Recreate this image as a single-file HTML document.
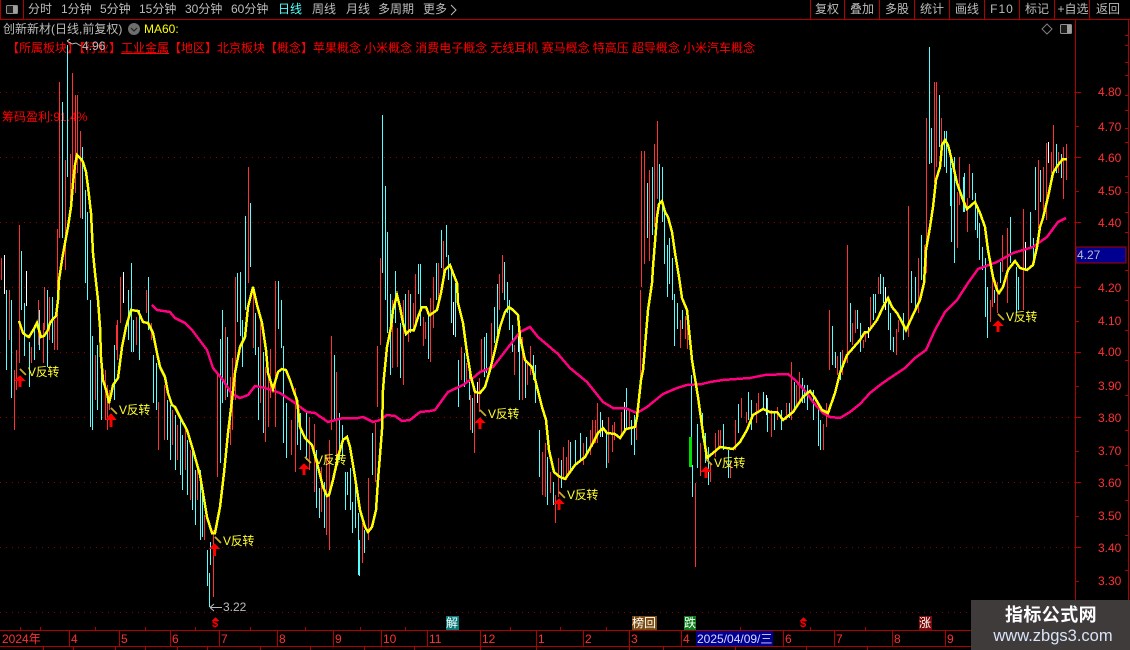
<!DOCTYPE html>
<html><head><meta charset="utf-8">
<style>
html,body{margin:0;padding:0;background:#000;}
#p{position:relative;width:1130px;height:650px;overflow:hidden;background:#000;font-family:"Liberation Sans","WenQuanYi Zen Hei","Noto Sans CJK SC",sans-serif;font-size:12px;line-height:14px;}
.t{position:absolute;white-space:pre;color:#bcbcbc;}
.c{transform:translateX(-50%);}
.r{color:#ff3232;}
.y{color:#ffff30;}
.v{letter-spacing:-.3px;}
svg{position:absolute;left:0;top:0;}
</style></head><body><div id="p">

<span class="t" style="left:2px;top:110px;font-size:12px;color:#f00">筹码盈利:91.4%</span>
<span class="t" style="left:7px;top:41px;color:#f00;word-spacing:-.2px">【所属板块】【行业】<u>工业金属</u>【地区】北京板块【概念】苹果概念 小米概念 消费电子概念 无线耳机 赛马概念 特高压 超导概念 小米汽车概念</span>
<span class="t" style="left:82px;top:39px">4.96</span>
<span class="t" style="left:223px;top:600px">3.22</span>

<svg width="1130" height="650" viewBox="0 0 1130 650">
<g shape-rendering="crispEdges">
<path d="M0 92.5H1075M0 157.5H1075M0 222.5H1075M0 287.5H1075M0 352.5H1075M0 417.5H1075M0 482.5H1075M0 547.5H1075M0 612.5H1075" stroke="#8a0000" stroke-dasharray="1 5" fill="none"/>
<!-- red wicks -->
<path fill="none" stroke="#ff3232" d="M1.5 258V280M9.5 290V340M14.5 370V430M16.5 350V390M19.5 225V363M31.5 347V363M38.5 300V345M43.5 323V363M44.5 287V330M49.5 297V340M54.5 320V350M57.5 229V350M59.5 82V238M65.5 160V270M70.5 154V207M72.5 73V185M75.5 95V193M77.5 95V173M80.5 131V218M95.5 355V400M105.5 370V420M107.5 385V430M109.5 390V410M117.5 320V360M116.5 325V350M120.5 277V323M136.5 317V345M146.5 290V313M151.5 323V340M158.5 402V450M164.5 385V440M172.5 410V445M177.5 425V460M185.5 430V470M190.5 450V500M197.5 465V500M204.5 515V540M213.5 530V597M217.5 373V477M225.5 327V400M230.5 377V445M232.5 358V430M235.5 277V400M248.5 167V283M253.5 290V348M260.5 323V403M265.5 367V442M268.5 373V427M270.5 349V398M275.5 281V427M291.5 420V455M295.5 388V472M309.5 417V470M314.5 424V492M321.5 467V512M326.5 455V535M329.5 440V550M331.5 336V430M336.5 372V470M362.5 523V563M368.5 478V540M375.5 423V482M377.5 346V407M380.5 258V345M392.5 300V368M397.5 328V367M403.5 300V385M408.5 290V342M413.5 303V332M415.5 274V323M423.5 317V346M425.5 322V339M430.5 298V362M433.5 277V328M438.5 263V300M443.5 241V277M461.5 347V380M466.5 363V382M470.5 395V430M474.5 393V453M479.5 378V412M481.5 339V370M491.5 323V363M499.5 274V310M502.5 255V293M514.5 345V375M522.5 337V400M527.5 362V385M530.5 346V375M542.5 452V495M545.5 443V497M550.5 472V493M555.5 495V523M558.5 458V497M563.5 447V477M566.5 457V480M568.5 440V473M583.5 443V465M590.5 430V455M592.5 420V447M595.5 420V443M597.5 403V443M608.5 417V463M612.5 425V452M614.5 422V440M621.5 412V438M629.5 410V427M636.5 417V440M640.5 290V390M641.5 151V287M644.5 151V264M649.5 170V261M654.5 144V227M657.5 121V199M680.5 320V348M685.5 316V339M687.5 310V349M695.5 483V567M700.5 443V476M706.5 467V478M710.5 463V482M715.5 433V457M718.5 430V450M720.5 430V447M730.5 462V478M735.5 420V450M741.5 398V418M746.5 412V423M756.5 403V423M758.5 393V410M771.5 410V437M777.5 407V420M786.5 403V420M791.5 362V420M796.5 385V405M799.5 372V403M823.5 424V450M826.5 403V427M829.5 310V370M837.5 356V375M842.5 350V375M847.5 245V363M852.5 323V345M855.5 310V333M863.5 340V348M865.5 333V342M870.5 297V327M878.5 277V294M896.5 329V355M898.5 320V332M908.5 206V337M918.5 258V313M924.5 245V273M926.5 118V273M934.5 82V183M936.5 82V167M941.5 118V147M957.5 192V248M959.5 157V205M967.5 198V232M969.5 164V198M990.5 300V322M992.5 277V307M997.5 282V313M1002.5 235V272M1007.5 228V303M1023.5 209V310M1038.5 160V228M1043.5 167V210M1046.5 143V220M1051.5 152V173M1053.5 125V170M1058.5 152V173M1063.5 147V199M1066.5 144V180"/>
<!-- cyan wicks -->
<path fill="none" stroke="#55ffff" d="M6.5 290V370M11.5 300V398M21.5 251V310M24.5 303V356M29.5 342V387M34.5 325V360M39.5 310V350M47.5 290V367M52.5 297V343M62.5 102V238M67.5 45V177M82.5 147V219M85.5 190V283M87.5 212V300M90.5 300V427M92.5 336V430M97.5 345V410M101.5 355V420M114.5 345V400M128.5 290V340M131.5 263V352M133.5 320V352M139.5 310V360M148.5 277V330M153.5 355V403M156.5 363V410M167.5 400V440M170.5 405V460M175.5 415V470M180.5 420V475M182.5 435V490M187.5 440V495M192.5 450V510M195.5 470V525M200.5 470V540M202.5 495V537M207.5 550V586M209.5 573V607M210.5 542V565M220.5 339V463M222.5 310V403M227.5 337V397M237.5 273V322M240.5 272V336M242.5 320V367M245.5 216V310M250.5 203V267M255.5 313V355M258.5 347V420M263.5 352V433M278.5 281V329M281.5 300V348M283.5 346V443M286.5 403V458M297.5 405V445M300.5 413V450M306.5 413V460M316.5 450V508M319.5 488V518M324.5 482V528M334.5 355V420M339.5 413V460M342.5 425V457M345.5 472V510M347.5 472V495M350.5 468V510M352.5 502V533M355.5 487V528M358.5 513V575M359.5 540V576M364.5 530V553M372.5 433V475M382.5 115V273M385.5 186V300M387.5 232V333M390.5 294V375M395.5 271V323M400.5 323V378M405.5 294V333M410.5 294V333M418.5 264V294M420.5 264V326M428.5 315V359M436.5 263V300M441.5 230V268M446.5 225V257M448.5 255V280M451.5 270V323M455.5 283V337M458.5 360V407M464.5 353V387M469.5 370V400M472.5 398V433M484.5 337V377M486.5 333V373M494.5 307V343M497.5 284V338M504.5 262V300M507.5 282V313M509.5 300V330M512.5 325V352M519.5 330V400M525.5 358V398M533.5 355V380M535.5 365V403M539.5 430V477M547.5 457V505M553.5 482V505M561.5 460V488M570.5 442V473M575.5 440V463M580.5 433V460M586.5 437V453M600.5 412V437M606.5 433V468M626.5 388V430M631.5 420V445M634.5 415V455M647.5 183V238M652.5 167V235M659.5 164V207M662.5 167V222M664.5 210V264M667.5 245V297M669.5 238V284M672.5 258V300M674.5 294V346M677.5 303V329M682.5 310V329M691.5 375V437M692.5 465V497M697.5 424V468M702.5 413V438M705.5 433V463M708.5 447V485M723.5 424V450M728.5 450V478M738.5 404V433M748.5 392V420M751.5 400V430M763.5 392V410M767.5 398V432M774.5 413V430M781.5 410V430M789.5 403V418M794.5 382V412M802.5 378V403M804.5 385V403M807.5 385V410M813.5 390V420M818.5 403V446M820.5 420V450M832.5 326V365M835.5 352V368M840.5 352V380M850.5 303V342M857.5 310V329M860.5 323V352M873.5 294V320M875.5 294V313M880.5 274V294M883.5 277V303M888.5 298V330M890.5 313V350M893.5 337V352M903.5 313V340M911.5 271V303M915.5 277V307M921.5 235V280M929.5 47V164M931.5 128V163M939.5 95V147M944.5 131V167M946.5 131V173M950.5 150V206M951.5 168V242M954.5 157V263M963.5 177V212M964.5 173V212M972.5 173V200M975.5 193V230M977.5 210V238M979.5 223V260M982.5 247V270M985.5 258V317M987.5 287V338M994.5 290V303M1000.5 262V283M1010.5 217V263M1016.5 267V313M1018.5 277V310M1030.5 212V248M1033.5 238V263M1035.5 167V210M1040.5 170V202M1056.5 144V173M1061.5 154V178"/>
<!-- white wicks -->
<path fill="none" stroke="#fff" d="M4.5 255V294M26.5 271V306M123.5 272V303M453.5 302V335M477.5 382V403M518.5 328V352M602.5 420V437M624.5 402V433M766.5 395V415M868.5 327V338M885.5 287V310M1025.5 242V270M1048.5 142V163"/>
<rect x="689" y="437" width="3" height="30" fill="#00e000"/>
<!-- MA60 -->
<polyline fill="none" stroke="#ff0080" stroke-width="2.5" points="152,305 157,310 170,312 175,318 185,323 192,330 207,350 213,368 223,380 232,394 240,398 248,395 255,386 265,388 280,393 295,403 307,412 315,413 328,422 343,418 358,418 363,417 373,422 380,420 387,415 395,416 402,421 410,420 420,412 430,411 435,410 448,392 463,385 473,378 480,372 493,367 510,345 520,332 530,327 538,337 558,354 570,368 587,382 603,402 613,408 625,408 637,413 647,407 663,394 677,388 687,385 702,384 710,382 723,380 750,378 765,375 788,374 795,380 807,393 813,402 823,413 830,417 840,418 850,412 860,404 870,393 880,385 890,378 905,368 915,358 926,350 935,330 945,312 957,300 968,283 978,269 997,262 1013,253 1033,247 1047,237 1058,222 1066,218"/>
<!-- Yellow -->
<polyline fill="none" stroke="#ffff00" stroke-width="2.5" points="19,321 23,333 27,336 29,337 32,332 35,327 37,323 39,330 41,337 44,336 48,330 50,323 53,319 56,316 58,300 59,280 62,260 65,243 68,227 71,207 73,183 75,165 77,155 80,158 83,162 86,172 88,187 91,213 93,253 95,273 98,300 100,327 101,357 103,380 107,393 109,403 111,395 113,385 118,378 122,347 126,327 131,310 138,311 143,322 148,323 153,333 157,353 160,367 165,377 168,393 172,405 175,407 180,417 187,430 193,450 200,475 203,493 207,517 212,533 215,533 220,507 224,473 228,433 232,400 235,373 240,347 245,337 248,307 253,287 257,305 262,323 266,350 268,373 273,389 278,372 282,369 286,370 290,380 294,392 297,400 300,427 305,438 312,445 317,463 323,487 327,496 329,495 333,480 338,457 343,440 347,437 350,447 355,477 360,510 365,527 368,532 372,527 376,510 378,480 382,430 383,390 384,377 387,347 391,327 393,310 397,295 400,307 403,323 406,334 410,330 414,330 418,317 422,307 426,307 429,315 430,315 437,310 441,293 445,270 450,265 453,273 457,283 458,303 463,323 467,353 471,377 475,392 480,393 485,387 490,370 495,350 500,327 505,312 509,307 513,310 518,315 520,337 525,360 532,367 537,387 542,407 546,420 549,450 554,472 560,477 565,479 570,472 575,465 585,457 593,443 598,433 603,428 607,433 615,434 620,438 626,429 635,427 637,417 641,380 643,370 648,310 652,283 653,267 657,217 659,204 662,201 665,212 668,217 672,232 675,253 679,277 682,298 687,310 689,330 692,360 698,397 703,433 707,458 713,453 720,447 733,449 740,442 747,430 753,415 763,409 770,412 777,412 783,420 793,412 803,397 810,391 815,398 822,410 828,413 835,393 840,373 847,355 860,340 865,332 868,332 877,320 883,307 888,298 892,307 897,313 902,322 906,330 912,317 920,300 924,283 926,250 930,227 933,207 936,180 940,167 942,145 945,140 948,145 953,165 957,183 963,200 967,209 975,202 980,213 985,227 988,250 993,277 997,290 999,293 1003,287 1008,270 1015,261 1020,268 1027,270 1033,265 1037,247 1040,227 1043,218 1048,197 1053,173 1058,165 1063,159 1067,159"/>
<!-- small arrows by label -->
<path fill="none" stroke="#c8a820" stroke-width="1.5" d="M20 369L26 375M111 408L117 414M215 537L221 543M305 457L311 463M480 410L486 416M559 492L565 498M706 459L712 465M998 314L1004 320"/>
</g>
<!-- up arrows -->
<g fill="#ff0000" shape-rendering="crispEdges">
<path d="M20 375L25.5 381H21.5V387H18.5V381H14.5Z"/>
<path d="M111 413L116.5 420H112.5V427H109.5V420H105.5Z"/>
<path d="M214.5 543L220 549H216V556H213V549H209Z"/>
<path d="M304 463L309.5 469H305.5V475H302.5V469H298.5Z"/>
<path d="M480 417L485.5 423H481.5V429H478.5V423H474.5Z"/>
<path d="M559 498L564.5 504H560.5V510H557.5V504H553.5Z"/>
<path d="M706 466L711.5 472H707.5V478H704.5V472H700.5Z"/>
<path d="M998 320L1003.5 326H999.5V332H996.5V326H992.5Z"/>
<path d="M215.5 617L219 621H212Z"/>
<path d="M803.5 617L807 621H800Z"/>
</g>
<!-- high/low markers -->
<path fill="none" stroke="#bcbcbc" d="M67 41L72 44L76 43L81 46M67 41L70 39M210 607.5H222M210 607.5L214 604M210 607.5L214 611"/>
<!-- Frame -->
<g shape-rendering="crispEdges" fill="none" stroke="#b00000">
<path d="M0 19.5H1130M0 630.5H971M0 646.5H971M1075.5 19V630M1128.5 19V600M23.5 0V19M810.5 0V19M844.5 0V19M879.5 0V19M914.5 0V19M949.5 0V19M984.5 0V19M1019.5 0V19M1054.5 0V19M1089.5 0V19M0.5 0V19"/>
<path d="M69.5 630V646M119.5 630V646M170.5 630V646M219.5 630V646M277.5 630V646M333.5 630V646M381.5 630V646M427.5 630V646M480.5 630V646M536.5 630V646M583.5 630V646M629.5 630V646M681.5 630V646M783.5 630V646M834.5 630V646M892.5 630V646M945.5 630V646"/>
<path d="M43.5 646V650M73.5 646V650M115.5 646V650M145.5 646V650M177.5 646V650M207.5 646V650M260.5 646V650M310.5 646V650M364.5 646V650M414.5 646V650M480.5 646V650M536.5 646V650M629.5 646V650M663.5 646V650M735.5 646V650M806.5 646V650M867.5 646V650"/>
<path d="M20.5 630V627M40.5 630V627M95.5 630V627M145.5 630V627M195.5 630V627M250.5 630V627M305.5 630V627M360.5 630V627M405.5 630V627M455.5 630V627M510.5 630V627M560.5 630V627M606.5 630V627M655.5 630V627M740.5 630V627M810.5 630V627M865.5 630V627M920.5 630V627"/>
<path d="M1075 92.5H1081M1075 126.5H1079M1075 157.5H1081M1075 191.5H1079M1075 222.5H1081M1075 287.5H1081M1075 321.5H1079M1075 352.5H1081M1075 386.5H1079M1075 417.5H1081M1075 451.5H1079M1075 482.5H1081M1075 516.5H1079M1075 547.5H1081M1075 581.5H1079"/>
<path d="M1125 35.5H1128M1125 45.5H1128M1125 62.5H1128M1125 75.5H1128M1125 95.5H1128M1125 110.5H1128M1125 128.5H1128M1125 142.5H1128M1125 176.5H1128M1125 192.5H1128M1125 212.5H1128M1125 232.5H1128M1125 270.5H1128M1125 300.5H1128M1125 330.5H1128M1125 360.5H1128M1125 395.5H1128M1125 430.5H1128M1125 465.5H1128M1125 500.5H1128M1125 535.5H1128M1125 570.5H1128"/>
</g>
<!-- icons -->
<rect x="6.5" y="5.5" width="11" height="8" rx="1" fill="#1a1a1a" stroke="#909090"/>
<rect x="13" y="6" width="4" height="7" fill="#a0a0a0"/>
<rect x="1060.5" y="24.5" width="11" height="9" rx="1" fill="#1a1a1a" stroke="#909090"/>
<rect x="1067" y="25" width="4" height="8" fill="#a0a0a0"/>
<path d="M1047 24L1052 29L1047 34L1042 29Z" fill="none" stroke="#808080"/>
<path d="M451 5L456 10L451 15" fill="none" stroke="#bcbcbc"/>
<circle cx="134" cy="29" r="6" fill="#6e6e6e"/>
<path d="M131 28L134 31L137 28" fill="none" stroke="#222" stroke-width="1.2"/>
<rect x="1076" y="247" width="50" height="16" fill="#000090" stroke="#b00000"/>
<!-- date markers -->
<rect x="446" y="616" width="13" height="14" fill="#087878"/>
<rect x="632" y="616" width="25" height="14" fill="#7a4a10"/>
<rect x="684" y="616" width="12" height="14" fill="#0a7a1a"/>
<rect x="919" y="616" width="13" height="14" fill="#7a0a0a"/>
<rect x="696" y="631" width="77" height="15" fill="#000090"/>
<rect x="971" y="600" width="159" height="50" fill="#3f3b3b"/>
</svg>

<!-- top tabs -->
<span class="t" style="left:28px;top:2px">分时</span>
<span class="t" style="left:61px;top:2px">1分钟</span>
<span class="t" style="left:100px;top:2px">5分钟</span>
<span class="t" style="left:139px;top:2px">15分钟</span>
<span class="t" style="left:185px;top:2px">30分钟</span>
<span class="t" style="left:231px;top:2px">60分钟</span>
<span class="t" style="left:278px;top:2px;color:#54ffff">日线</span>
<span class="t" style="left:312px;top:2px">周线</span>
<span class="t" style="left:346px;top:2px">月线</span>
<span class="t" style="left:378px;top:2px">多周期</span>
<span class="t" style="left:423px;top:2px">更多</span>
<span class="t c" style="left:827px;top:2px">复权</span>
<span class="t c" style="left:862px;top:2px">叠加</span>
<span class="t c" style="left:897px;top:2px">多股</span>
<span class="t c" style="left:932px;top:2px">统计</span>
<span class="t c" style="left:967px;top:2px">画线</span>
<span class="t c" style="left:1002px;top:2px;letter-spacing:1px">F10</span>
<span class="t c" style="left:1037px;top:2px">标记</span>
<span class="t c" style="left:1073px;top:2px">+自选</span>
<span class="t c" style="left:1108px;top:2px">返回</span>

<span class="t" style="left:3px;top:22px">创新新材(日线,前复权)</span>
<span class="t y" style="left:144px;top:22px;font-size:12px;color:#ffff00">MA60:</span>

<!-- V labels -->
<span class="t y v" style="left:28px;top:365px">V反转</span>
<span class="t y v" style="left:119px;top:403px">V反转</span>
<span class="t y v" style="left:223px;top:534px">V反转</span>
<span class="t y v" style="left:315px;top:453px">V反转</span>
<span class="t y v" style="left:488px;top:407px">V反转</span>
<span class="t y v" style="left:567px;top:488px">V反转</span>
<span class="t y v" style="left:714px;top:456px">V反转</span>
<span class="t y v" style="left:1006px;top:310px">V反转</span>

<!-- right axis -->
<span class="t r" style="left:1098px;top:85px">4.80</span>
<span class="t r" style="left:1098px;top:120px">4.70</span>
<span class="t r" style="left:1098px;top:151px">4.60</span>
<span class="t r" style="left:1098px;top:184px">4.50</span>
<span class="t r" style="left:1098px;top:216px">4.40</span>
<span class="t" style="left:1077px;top:248px">4.27</span>
<span class="t r" style="left:1098px;top:281px">4.20</span>
<span class="t r" style="left:1098px;top:314px">4.10</span>
<span class="t r" style="left:1098px;top:345px">4.00</span>
<span class="t r" style="left:1098px;top:379px">3.90</span>
<span class="t r" style="left:1098px;top:411px">3.80</span>
<span class="t r" style="left:1098px;top:444px">3.70</span>
<span class="t r" style="left:1098px;top:476px">3.60</span>
<span class="t r" style="left:1098px;top:509px">3.50</span>
<span class="t r" style="left:1098px;top:541px">3.40</span>
<span class="t r" style="left:1098px;top:574px">3.30</span>

<!-- bottom axis -->
<span class="t r" style="left:2px;top:632px">2024年</span>
<span class="t r" style="left:71px;top:632px">4</span>
<span class="t r" style="left:121px;top:632px">5</span>
<span class="t r" style="left:172px;top:632px">6</span>
<span class="t r" style="left:221px;top:632px">7</span>
<span class="t r" style="left:279px;top:632px">8</span>
<span class="t r" style="left:335px;top:632px">9</span>
<span class="t r" style="left:383px;top:632px">10</span>
<span class="t r" style="left:429px;top:632px">11</span>
<span class="t r" style="left:482px;top:632px">12</span>
<span class="t r" style="left:538px;top:632px">1</span>
<span class="t r" style="left:585px;top:632px">2</span>
<span class="t r" style="left:631px;top:632px">3</span>
<span class="t r" style="left:683px;top:632px">4</span>
<span class="t" style="left:697px;top:632px;color:#d8d8ff">2025/04/09/三</span>
<span class="t r" style="left:785px;top:632px">6</span>
<span class="t r" style="left:836px;top:632px">7</span>
<span class="t r" style="left:894px;top:632px">8</span>
<span class="t r" style="left:947px;top:632px">9</span>

<!-- markers -->
<span class="t" style="left:212px;top:618px;color:#f00;font-weight:bold;font-size:11px;line-height:12px">$</span>
<span class="t" style="left:800px;top:618px;color:#f00;font-weight:bold;font-size:11px;line-height:12px">$</span>
<span class="t" style="left:446px;top:616px;color:#fff">解</span>
<span class="t" style="left:632px;top:616px;color:#fff">榜回</span>
<span class="t" style="left:684px;top:616px;color:#fff">跌</span>
<span class="t" style="left:919px;top:616px;color:#fff">涨</span>

<!-- watermark -->
<span class="t c" style="left:1051px;top:605px;color:#fff;font-weight:bold;font-size:18px;line-height:20px;letter-spacing:.4px">指标公式网</span>
<span class="t c" style="left:1053px;top:628px;color:#d8e4f8;font-size:16.5px;line-height:17px">www.zbgs3.com</span>

</div></body></html>
